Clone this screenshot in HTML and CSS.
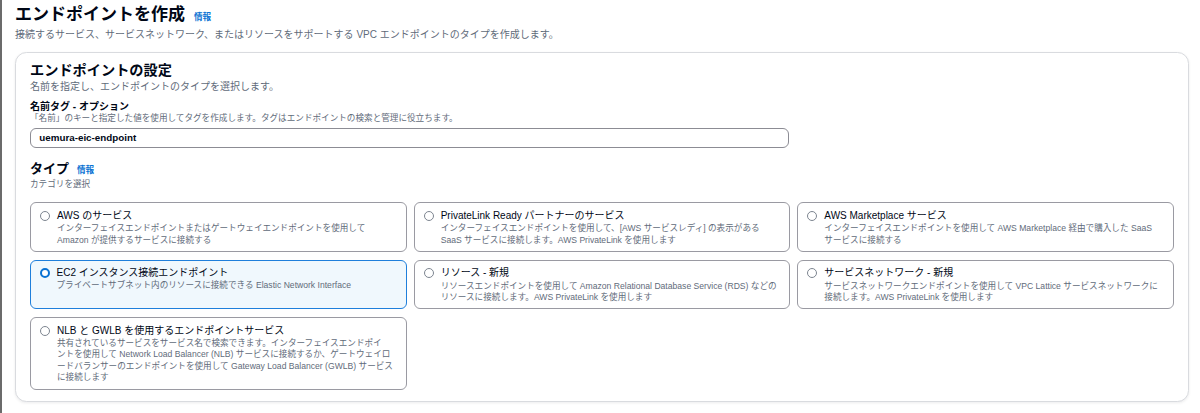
FILE: index.html
```html
<!DOCTYPE html>
<html lang="ja">
<head>
<meta charset="utf-8">
<title>エンドポイントを作成</title>
<link rel="stylesheet" href="styles.css">
</head>
<body>
<div class="page">
  <h1 class="page-title">エンドポイントを作成<a class="info" href="#">情報</a></h1>
  <p class="page-desc">接続するサービス、サービスネットワーク、またはリソースをサポートする VPC エンドポイントのタイプを作成します。</p>

  <section class="panel">
    <h2 class="panel-title">エンドポイントの設定</h2>
    <p class="panel-desc">名前を指定し、エンドポイントのタイプを選択します。</p>

    <div class="field">
      <div class="field-label">名前タグ - オプション</div>
      <div class="field-hint">「名前」のキーと指定した値を使用してタグを作成します。タグはエンドポイントの検索と管理に役立ちます。</div>
      <div class="input">uemura-eic-endpoint</div>
    </div>

    <h3 class="type-title">タイプ<a class="info" href="#">情報</a></h3>
    <div class="type-hint">カテゴリを選択</div>

    <div class="tiles">
      <div class="tile">
        <span class="radio"></span>
        <div class="tile-body">
          <div class="tile-title">AWS のサービス</div>
          <div class="tile-desc">インターフェイスエンドポイントまたはゲートウェイエンドポイントを使用して<br>Amazon が提供するサービスに接続する</div>
        </div>
      </div>
      <div class="tile">
        <span class="radio"></span>
        <div class="tile-body">
          <div class="tile-title">PrivateLink Ready パートナーのサービス</div>
          <div class="tile-desc">インターフェイスエンドポイントを使用して、[AWS サービスレディ] の表示がある<br>SaaS サービスに接続します。AWS PrivateLink を使用します</div>
        </div>
      </div>
      <div class="tile">
        <span class="radio"></span>
        <div class="tile-body">
          <div class="tile-title">AWS Marketplace サービス</div>
          <div class="tile-desc">インターフェイスエンドポイントを使用して AWS Marketplace 経由で購入した SaaS<br>サービスに接続する</div>
        </div>
      </div>
      <div class="tile selected">
        <span class="radio checked"></span>
        <div class="tile-body">
          <div class="tile-title">EC2 インスタンス接続エンドポイント</div>
          <div class="tile-desc">プライベートサブネット内のリソースに接続できる Elastic Network Interface</div>
        </div>
      </div>
      <div class="tile">
        <span class="radio"></span>
        <div class="tile-body">
          <div class="tile-title">リソース - 新規</div>
          <div class="tile-desc">リソースエンドポイントを使用して Amazon Relational Database Service (RDS) などの<br>リソースに接続します。AWS PrivateLink を使用します</div>
        </div>
      </div>
      <div class="tile">
        <span class="radio"></span>
        <div class="tile-body">
          <div class="tile-title">サービスネットワーク - 新規</div>
          <div class="tile-desc">サービスネットワークエンドポイントを使用して VPC Lattice サービスネットワークに<br>接続します。AWS PrivateLink を使用します</div>
        </div>
      </div>
      <div class="tile">
        <span class="radio"></span>
        <div class="tile-body">
          <div class="tile-title">NLB と GWLB を使用するエンドポイントサービス</div>
          <div class="tile-desc">共有されているサービスをサービス名で検索できます。インターフェイスエンドポイ<br>ントを使用して Network Load Balancer (NLB) サービスに接続するか、ゲートウェイロ<br>ードバランサーのエンドポイントを使用して Gateway Load Balancer (GWLB) サービス<br>に接続します</div>
        </div>
      </div>
    </div>
  </section>
</div>
</body>
</html>
```

FILE: styles.css
```css
* {
  box-sizing: border-box;
}

html, body {
  margin: 0;
  padding: 0;
  background: #ffffff;
}

body {
  font-family: "Liberation Sans", "Noto Sans CJK JP", sans-serif;
  color: #000716;
}

.page {
  border-left: 2px solid #6b6b6b;
  padding: 4px 11px 0 13px;
  min-height: 413px;
}

.page-title {
  margin: 0;
  font-size: 17px;
  line-height: 21.6px;
  font-weight: 700;
  color: #000716;
}

.info {
  font-size: 8.6px;
  line-height: 1;
  font-weight: 700;
  color: #0972d3;
  text-decoration: none;
  margin-left: 9px;
}

.page-desc {
  margin: 2.7px 0 0;
  font-size: 10px;
  line-height: 14.4px;
  color: #5f6b7a;
}

.panel {
  margin-top: 9px;
  border: 1px solid #d9dbdf;
  border-radius: 11.5px;
  box-shadow: 0 1px 3px rgba(0, 7, 22, 0.08);
  padding: 9.7px 14px 11px 14px;
  background: #ffffff;
}

.panel-title {
  margin: 0;
  font-size: 14.2px;
  line-height: 17.3px;
  font-weight: 700;
}

.panel-desc {
  margin: 0.8px 0 0;
  font-size: 10px;
  line-height: 14.4px;
  color: #5f6b7a;
}

.field {
  margin-top: 5.3px;
}

.field-label {
  font-size: 10px;
  line-height: 13px;
  font-weight: 700;
}

.field-hint {
  font-size: 8.6px;
  line-height: 11.5px;
  color: #5f6b7a;
}

.input {
  margin-top: 3.6px;
  width: 758.5px;
  height: 20px;
  border: 1px solid #8c8c94;
  border-radius: 6px;
  padding-left: 8.3px;
  font-size: 9.8px;
  line-height: 18px;
  font-weight: 700;
  color: #000716;
}

.type-title {
  margin: 13.1px 0 0;
  font-size: 13px;
  line-height: 15.8px;
  font-weight: 700;
}

.type-title .info {
  margin-left: 8px;
}

.type-hint {
  margin-top: 1.8px;
  font-size: 8.6px;
  line-height: 11.5px;
  color: #5f6b7a;
}

.tiles {
  margin-top: 11.8px;
  display: grid;
  grid-template-columns: repeat(3, 1fr);
  column-gap: 7px;
  row-gap: 7.7px;
}

.tile {
  display: flex;
  align-items: flex-start;
  gap: 7px;
  border: 1px solid #9a9aa2;
  border-radius: 6px;
  padding: 5.5px 6px 5px 9px;
  background: #ffffff;
}

.tile.selected {
  border: 1.5px solid #1f7fdb;
  padding: 5px 5.5px 4.5px 8.5px;
  background: #f0f8fd;
}

.radio {
  flex: none;
  width: 10px;
  height: 10px;
  margin-top: 2.2px;
  border: 1.3px solid #7d8590;
  border-radius: 50%;
  background: #ffffff;
}

.radio.checked {
  border: 2.9px solid #0972d3;
}

.tile-body {
  min-width: 0;
}

.tile-title {
  font-size: 10px;
  line-height: 14.4px;
  color: #000716;
  white-space: nowrap;
}

.tile-desc {
  font-size: 8.6px;
  line-height: 11.4px;
  color: #5f6b7a;
  white-space: nowrap;
}
```
